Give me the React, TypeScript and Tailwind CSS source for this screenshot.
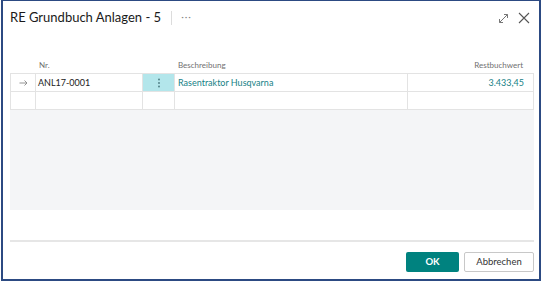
export default function App() {
  const font = { fontFamily: "Lato, 'Open Sans', sans-serif" }

  return (
    <div className="w-[543px] h-[282px] bg-white" style={font}>
      <div className="ml-px w-[540px] h-[281px] border-t border-x-2 border-b-2 border-[#2c4a82] bg-white flex flex-col pl-[7px] pr-[5px]">
        {/* Header */}
        <div className="h-[34px] flex items-center">
          <span className="text-[13px] text-[#1a1a1a]">RE Grundbuch Anlagen - 5</span>
          <span className="ml-[10px] w-px h-[14px] bg-[#dcdcdc]" />
          <span className="ml-[9px] text-[10px] text-[#8a8a8a] tracking-[1px] -mt-[4px]">···</span>
          <div className="ml-auto flex items-center gap-[9px] pr-[4px]">
            <svg width="11" height="11" viewBox="0 0 11 11" fill="none" stroke="#777" strokeWidth="1">
              <path d="M1.5 9.5 L9.5 1.5" />
              <path d="M6 1.5 H9.5 V5" />
              <path d="M1.5 6 V9.5 H5" />
            </svg>
            <svg width="12" height="12" viewBox="0 0 12 12" fill="none" stroke="#555" strokeWidth="1.1">
              <path d="M1 1 L11 11 M11 1 L1 11" />
            </svg>
          </div>
        </div>

        {/* Column headers */}
        <div className="mt-[22px] h-[16px] grid grid-cols-[25px_107px_32px_233px_126px] text-[8px] text-[#707070] items-center">
          <div />
          <div className="pl-[4px]">Nr.</div>
          <div />
          <div className="pl-[4px]">Beschreibung</div>
          <div className="text-right pr-[10px]">Restbuchwert</div>
        </div>

        {/* Rows */}
        <div className="border-t border-l border-[#e3e3e3]">
          <div className="h-[18px] grid grid-cols-[25px_107px_32px_233px_126px] text-[9px]">
            <div className="border-r border-b border-[#e3e3e3] flex items-center justify-center">
              <svg width="9" height="6" viewBox="0 0 9 6" fill="none" stroke="#888" strokeWidth="0.9">
                <path d="M0.5 3 H8 M5.5 0.5 L8 3 L5.5 5.5" />
              </svg>
            </div>
            <div className="border-r border-b border-[#e3e3e3] flex items-center pl-[2px] text-[#212121]">ANL17-0001</div>
            <div className="border-r border-b border-[#e3e3e3] bg-[#b3e6eb] flex items-center justify-center">
              <svg width="2" height="10" viewBox="0 0 2 10" fill="#4a7a80">
                <circle cx="1" cy="1.5" r="0.9" />
                <circle cx="1" cy="5" r="0.9" />
                <circle cx="1" cy="8.5" r="0.9" />
              </svg>
            </div>
            <div className="border-r border-b border-[#e3e3e3] flex items-center pl-[3px] text-[#167f86]">Rasentraktor Husqvarna</div>
            <div className="border-r border-b border-[#e3e3e3] flex items-center justify-end pr-[9px] text-[#167f86]">3.433,45</div>
          </div>
          <div className="h-[18px] grid grid-cols-[25px_107px_32px_233px_126px]">
            <div className="border-r border-b border-[#e3e3e3]" />
            <div className="border-r border-b border-[#e3e3e3]" />
            <div className="border-r border-b border-[#e3e3e3]" />
            <div className="border-r border-b border-[#e3e3e3]" />
            <div className="border-r border-b border-[#e3e3e3]" />
          </div>
        </div>
        <div className="h-[100px] bg-[#f4f5f7]" />

        {/* Footer */}
        <div className="mt-[30px] h-[2px] bg-[#e6e6e6]" />
        <div className="mt-[10px] flex justify-end gap-[5px]">
          <button className="w-[53px] h-[20px] bg-[#00827f] text-white text-[9.5px] font-bold rounded-[2px]">OK</button>
          <button className="w-[70px] h-[20px] bg-white border border-[#c8c8c8] text-[#333] text-[9.5px] rounded-[2px]">Abbrechen</button>
        </div>
      </div>
    </div>
  )
}
